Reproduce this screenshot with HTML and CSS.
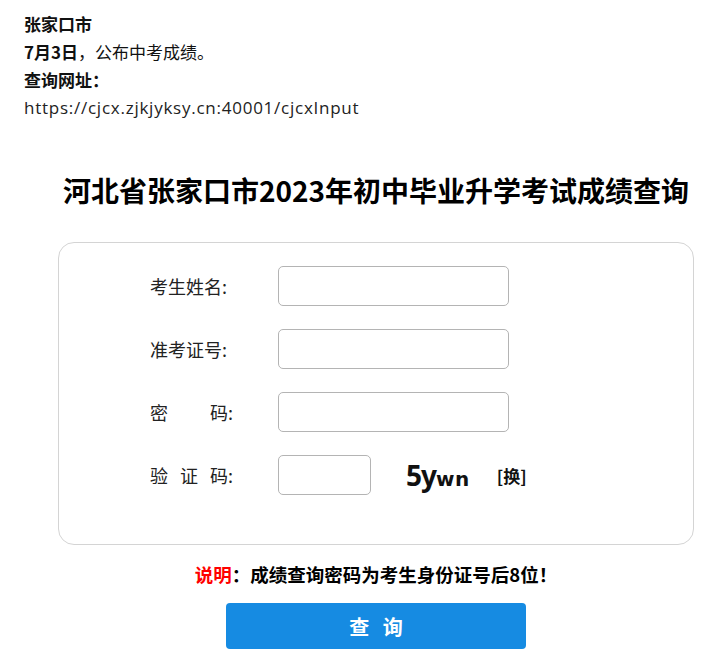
FILE: index.html
```html
<!DOCTYPE html>
<html lang="zh-CN">
<head>
  <meta charset="UTF-8">
  <meta name="viewport" content="width=device-width, initial-scale=1.0">
  <title>张家口市中考成绩查询</title>
  <link rel="stylesheet" href="styles.css">
</head>
<body>
  <div class="notice">
    <p><b>张家口市</b></p>
    <p><b>7月3日</b>，公布中考成绩。</p>
    <p><b>查询网址：</b></p>
    <p class="url">https://cjcx.zjkjyksy.cn:40001/cjcxInput</p>
  </div>

  <div class="container">
    <h1 class="title">河北省张家口市2023年初中毕业升学考试成绩查询</h1>

    <form class="query-box" onsubmit="return false;">
      <div class="form-row">
        <label class="form-label">考生姓名:</label>
        <input type="text" class="form-input">
      </div>
      <div class="form-row">
        <label class="form-label">准考证号:</label>
        <input type="text" class="form-input">
      </div>
      <div class="form-row">
        <label class="form-label spread"><span>密</span><span>码:</span></label>
        <input type="password" class="form-input">
      </div>
      <div class="form-row">
        <label class="form-label spread"><span>验</span><span>证</span><span>码:</span></label>
        <input type="text" class="form-input short">
        <span class="captcha"><span class="big">5y</span>wn</span>
        <a class="refresh">[换]</a>
      </div>
    </form>

    <p class="tip"><span class="tip-key">说明</span>：成绩查询密码为考生身份证号后8位！</p>

    <button class="submit-button">查&nbsp;&nbsp;&nbsp;询</button>
  </div>
</body>
</html>
```

FILE: styles.css
```css
* {
  margin: 0;
  padding: 0;
  box-sizing: border-box;
  font-family: "Noto Sans CJK SC", "Noto Sans", sans-serif;
}

body {
  background-color: #fff;
  color: #111;
  padding: 10px 24px 0;
}

.notice p {
  font-size: 17px;
  line-height: 28px;
}

.notice b {
  font-weight: 700;
}

.url {
  font-family: "Open Sans", "Noto Sans", sans-serif;
  color: #222;
  letter-spacing: 0.75px;
}

.container {
  width: 636px;
  margin-left: 34px;
  display: flex;
  flex-direction: column;
  align-items: center;
}

.title {
  margin-top: 48px;
  font-size: 28px;
  line-height: 40px;
  font-weight: 700;
  color: #000;
}

.query-box {
  width: 100%;
  margin-top: 32px;
  border: 1px solid #d4d4d4;
  border-radius: 16px;
  padding: 23px 0 49px 91px;
  display: flex;
  flex-direction: column;
  gap: 23px;
}

.form-row {
  display: flex;
  align-items: center;
  height: 40px;
}

.form-label {
  width: 128px;
  font-size: 18px;
  color: #222;
}

.form-label.spread {
  display: flex;
  justify-content: space-between;
  width: 83px;
  margin-right: 45px;
}

.form-input {
  width: 231px;
  height: 40px;
  border: 1px solid #b4b4b4;
  border-radius: 5px;
  outline: none;
  font-size: 16px;
  padding: 0 8px;
}

.form-input.short {
  width: 93px;
}

.captcha {
  margin-left: 35px;
  font-family: "DejaVu Sans", sans-serif;
  font-weight: 700;
  font-size: 20px;
  color: #111;
  letter-spacing: 0.5px;
}

.captcha .big {
  font-family: "Noto Sans", sans-serif;
  font-size: 28px;
  letter-spacing: -1px;
}

.refresh {
  margin-left: 27px;
  font-size: 17px;
  font-weight: 700;
  color: #111;
  cursor: pointer;
}

.tip {
  margin-top: 15px;
  font-size: 18.5px;
  font-weight: 700;
  color: #000;
  line-height: 28px;
}

.tip-key {
  color: #f00;
}

.submit-button {
  margin-top: 15px;
  width: 300px;
  height: 46px;
  border: none;
  border-radius: 4px;
  background-color: #168be2;
  color: #fff;
  font-size: 20px;
  font-weight: 700;
  cursor: pointer;
}
```
